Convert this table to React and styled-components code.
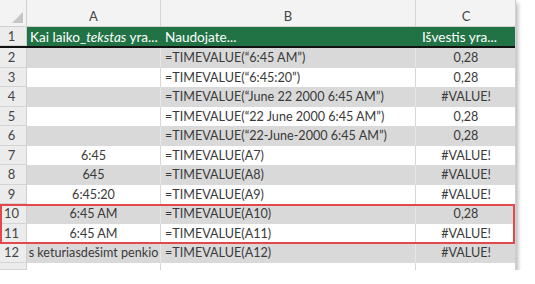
import React from "react";
import styled, { createGlobalStyle } from "styled-components";

const Global = createGlobalStyle`
  html, body { margin: 0; padding: 0; background: #ffffff; }
  body { font-family: Lato, "Open Sans", sans-serif; }
`;

const COLS = "27px 134px 255px 100px";

const Sheet = styled.div`
  width: 516px;
  display: flex;
  flex-direction: column;
  background: #ffffff;
  box-shadow: 2px 3px 4px rgba(0, 0, 0, 0.28);
  border-right: 1px solid #d0d0d0;
  box-sizing: border-box;
`;

const Row = styled.div`
  display: grid;
  grid-template-columns: ${COLS};
  height: ${(p) => p.$h}px;
  background: ${(p) => (p.$shade ? "#d9d9d9" : "#ffffff")};
  box-sizing: border-box;
`;

const HeadRow = styled(Row)`
  background: #f3f3f3;
  border-bottom: 1px solid #cfcfcf;
`;

const TitleRow = styled(Row)`
  background: #217346;
  border-bottom: 2px solid #111;
`;

const Corner = styled.div`
  display: flex;
  align-items: flex-end;
  justify-content: flex-end;
  padding: 0 3px 3px 0;
  border-right: 1px solid #cfcfcf;
`;

const ColLetter = styled.div`
  display: flex;
  align-items: flex-end;
  justify-content: center;
  padding-bottom: 2px;
  font-size: 13px;
  color: #444;
  border-right: 1px solid #d6d6d6;
  &:last-child { border-right: none; }
`;

const RowNum = styled.div`
  display: flex;
  align-items: center;
  justify-content: center;
  padding-right: 3px;
  font-size: 13px;
  color: #444;
  background: #ececec;
  border-right: 1px solid #cfcfcf;
  border-bottom: 1px solid #d4d4d4;
  box-sizing: border-box;
  overflow: hidden;
`;

const Cell = styled.div`
  display: flex;
  align-items: center;
  justify-content: center;
  justify-content: ${(p) => (p.$align === "center" ? "center" : "flex-start")};
  padding: 0 ${(p) => (p.$align === "center" ? 0 : 4)}px;
  font-size: 12.6px;
  color: #3a3a3a;
  white-space: nowrap;
  overflow: hidden;
  border-right: 1px solid ${(p) => (p.$shade ? "#e6e6e6" : "#d6d6d6")};
  box-sizing: border-box;
  &:last-child { border-right: none; }
`;

const TitleCell = styled.div`
  display: flex;
  align-items: center;
  padding: 0 ${(p) => p.$pad}px;
  font-size: 13.6px;
  color: #ffffff;
  white-space: nowrap;
  overflow: hidden;
  em { font-style: italic; }
`;

const Highlight = styled.div`
  position: relative;
  display: flex;
  flex-direction: column;
  &::after {
    content: "";
    position: absolute;
    inset: 0 0 -1px 0;
    border: 2px solid #e5484b;
    pointer-events: none;
  }
`;

const rows = [
  { n: 2, a: "", b: "=TIMEVALUE(\u201C6:45 AM\u201D)", c: "0,28" },
  { n: 3, a: "", b: "=TIMEVALUE(\u201C6:45:20\u201D)", c: "0,28" },
  { n: 4, a: "", b: "=TIMEVALUE(\u201CJune 22 2000 6:45 AM\u201D)", c: "#VALUE!" },
  { n: 5, a: "", b: "=TIMEVALUE(\u201C22 June 2000 6:45 AM\u201D)", c: "0,28" },
  { n: 6, a: "", b: "=TIMEVALUE(\u201C22-June-2000 6:45 AM\u201D)", c: "0,28" },
  { n: 7, a: "6:45", b: "=TIMEVALUE(A7)", c: "#VALUE!" },
  { n: 8, a: "645", b: "=TIMEVALUE(A8)", c: "#VALUE!" },
  { n: 9, a: "6:45:20", b: "=TIMEVALUE(A9)", c: "#VALUE!" },
  { n: 10, a: "6:45 AM", b: "=TIMEVALUE(A10)", c: "0,28" },
  { n: 11, a: "6:45 AM", b: "=TIMEVALUE(A11)", c: "#VALUE!" },
  { n: 12, a: "s keturiasde\u0161imt penkio", b: "=TIMEVALUE(A12)", c: "#VALUE!" },
];

function DataRow({ r }) {
  const shade = r.n % 2 === 0;
  return (
    <Row $h={19.5} $shade={shade}>
      <RowNum>{r.n}</RowNum>
      <Cell $shade={shade} $align="center">{r.a}</Cell>
      <Cell $shade={shade}>{r.b}</Cell>
      <Cell $shade={shade} $align="center">{r.c}</Cell>
    </Row>
  );
}

export default function App() {
  const before = rows.filter((r) => r.n < 10);
  const hl = rows.filter((r) => r.n === 10 || r.n === 11);
  const after = rows.filter((r) => r.n > 11);
  return (
    <>
      <Global />
      <Sheet>
        <HeadRow $h={27}>
          <Corner>
            <svg width="11" height="11" viewBox="0 0 11 11">
              <polygon points="11,0 11,11 0,11" fill="#c6c6c6" />
            </svg>
          </Corner>
          <ColLetter>A</ColLetter>
          <ColLetter>B</ColLetter>
          <ColLetter>C</ColLetter>
        </HeadRow>
        <TitleRow $h={21}>
          <RowNum>1</RowNum>
          <TitleCell $pad={3}>
            Kai laiko_<em>tekstas</em>&nbsp;yra...
          </TitleCell>
          <TitleCell $pad={4}>Naudojate...</TitleCell>
          <TitleCell $pad={6}>Išvestis yra...</TitleCell>
        </TitleRow>
        {before.map((r) => (
          <DataRow key={r.n} r={r} />
        ))}
        <Highlight>
          {hl.map((r) => (
            <DataRow key={r.n} r={r} />
          ))}
        </Highlight>
        {after.map((r) => (
          <DataRow key={r.n} r={r} />
        ))}
        <Row $h={7}>
          <RowNum />
          <Cell />
          <Cell />
          <Cell />
        </Row>
      </Sheet>
    </>
  );
}
